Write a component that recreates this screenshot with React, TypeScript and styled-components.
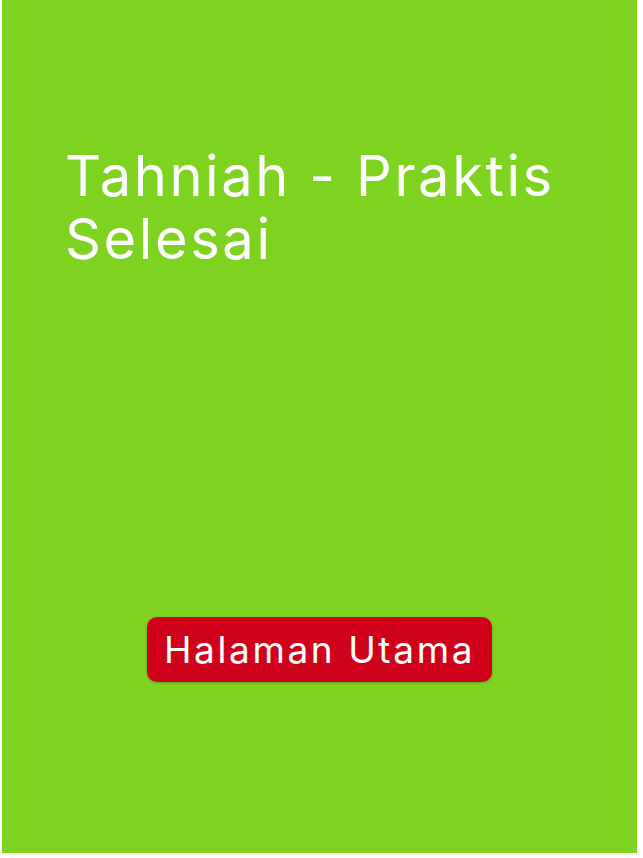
import React from "react";
import styled, { createGlobalStyle } from "styled-components";

const GlobalStyle = createGlobalStyle`
  html, body {
    margin: 0;
    padding: 0;
    background: #ffffff;
  }
`;

const StyledPage = styled.div`
  display: flex;
  width: 643px;
  height: 858px;
  padding-left: 2px;
  box-sizing: border-box;
`;

const StyledScreen = styled.div`
  display: flex;
  flex-direction: column;
  width: 635px;
  height: 853px;
  background: #7ed321;
  font-family: Inter, "Noto Sans", sans-serif;
`;

const StyledTitle = styled.h1`
  margin: 145px 0 0 63px;
  font-size: 56px;
  line-height: 63px;
  font-weight: 400;
  color: #ffffff;
  letter-spacing: 2.6px;
`;

const StyledButtonRow = styled.div`
  display: flex;
  justify-content: center;
  margin-top: 346px;
`;

const StyledButton = styled.button`
  width: 345px;
  height: 65px;
  padding: 0;
  border: none;
  border-radius: 10px;
  background: #d0021b;
  color: #ffffff;
  font-family: Inter, "Noto Sans", sans-serif;
  font-size: 37px;
  font-weight: 400;
  letter-spacing: 2.6px;
  box-shadow: 0 1px 3px rgba(0, 0, 0, 0.25);
  cursor: pointer;
`;

const App: React.FC = () => {
  return (
    <>
      <GlobalStyle />
      <StyledPage>
        <StyledScreen>
          <StyledTitle>
            Tahniah - Praktis
            <br />
            Selesai
          </StyledTitle>
          <StyledButtonRow>
            <StyledButton>Halaman Utama</StyledButton>
          </StyledButtonRow>
        </StyledScreen>
      </StyledPage>
    </>
  );
};

export default App;
